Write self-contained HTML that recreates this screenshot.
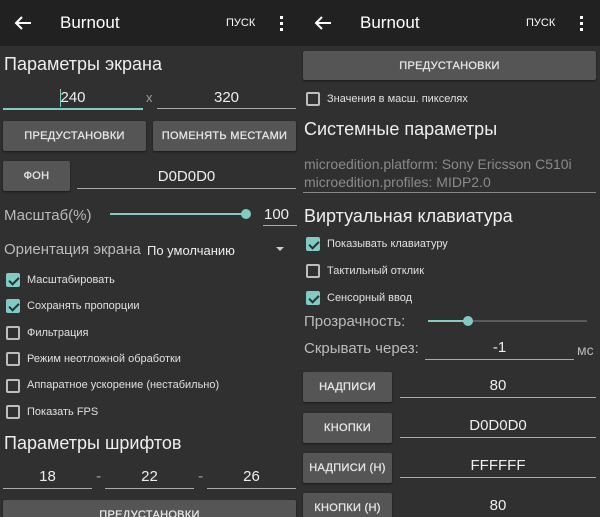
<!DOCTYPE html>
<html style="width:600px;height:517px;overflow:hidden"><head><meta charset="utf-8"><style>
*{margin:0;padding:0;box-sizing:border-box}
body{width:600px;height:517px;background:#303030;font-family:"Liberation Sans",sans-serif;color:#e8e8e8;position:relative;overflow:hidden}
.a{position:absolute;white-space:nowrap}
.bar{position:absolute;top:0;height:46px;width:300px;background:#212121}
.h{font-size:18px;color:#eee}
.btn{position:absolute;background:#555;color:#e6e6e6;font-size:11px;font-weight:normal;letter-spacing:0.3px;-webkit-text-stroke:0.3px #e6e6e6;display:flex;align-items:center;justify-content:center;border-radius:2px;box-shadow:0 1px 2px rgba(0,0,0,.5)}
.ul{position:absolute;height:1px;background:#aaa}
.in{position:absolute;font-size:15px;text-align:center;color:#eee}
.cb{position:absolute;width:14px;height:14px;border:2px solid #bdbdbd;border-radius:2px}
.cb.on{background:#80cbc4;border-color:#80cbc4}
.cb.on::after{content:"";position:absolute;left:3px;top:0px;width:4px;height:8px;border:solid #263238;border-width:0 2px 2px 0;transform:rotate(45deg)}
.ct{position:absolute;font-size:11px;color:#e0e0e0}
.lbl{position:absolute;font-size:15px;color:#bbb}
</style></head><body>
<div class="bar" style="left:0"></div><div class="bar" style="left:300px"></div>
<svg class="a" style="left:14px;top:15px" width="18" height="16"><path d="M2 8H17M8 2L2 8L8 14" stroke="#fff" stroke-width="2" fill="none"/></svg>
<div class="a" style="left:60px;top:13px;font-size:17px;color:#fff">Burnout</div>
<div class="a" style="left:226px;top:17px;font-size:11px;color:#fff">ПУСК</div>
<div class="a" style="left:280px;top:16px;width:3px;height:3px;background:#fff;box-shadow:0 6px #fff,0 12px #fff"></div>
<svg class="a" style="left:314px;top:15px" width="18" height="16"><path d="M2 8H17M8 2L2 8L8 14" stroke="#fff" stroke-width="2" fill="none"/></svg>
<div class="a" style="left:360px;top:13px;font-size:17px;color:#fff">Burnout</div>
<div class="a" style="left:526px;top:17px;font-size:11px;color:#fff">ПУСК</div>
<div class="a" style="left:580px;top:16px;width:3px;height:3px;background:#fff;box-shadow:0 6px #fff,0 12px #fff"></div>

<!-- left -->
<div class="a h" style="left:4px;top:54px">Параметры экрана</div>
<div class="in" style="left:3px;top:89px;width:140px">240</div>
<div class="a" style="left:60px;top:89px;width:1px;height:18px;background:#80cbc4"></div>
<div class="ul" style="left:3px;top:108px;width:140px;height:2px;background:#80cbc4"></div>
<div class="a" style="left:146px;top:90px;font-size:13px;color:#999">x</div>
<div class="in" style="left:157px;top:89px;width:139px">320</div>
<div class="ul" style="left:157px;top:108px;width:139px"></div>
<div class="btn" style="left:3px;top:121px;width:143px;height:30px">ПРЕДУСТАНОВКИ</div>
<div class="btn" style="left:153px;top:121px;width:143px;height:30px">ПОМЕНЯТЬ МЕСТАМИ</div>
<div class="btn" style="left:3px;top:161px;width:67px;height:30px">ФОН</div>
<div class="in" style="left:77px;top:168px;width:219px">D0D0D0</div>
<div class="ul" style="left:77px;top:188px;width:219px"></div>
<div class="lbl" style="left:4px;top:207px">Масштаб(%)</div>
<div class="a" style="left:110px;top:213px;width:136px;height:2px;background:#80cbc4"></div>
<div class="a" style="left:241px;top:209px;width:10px;height:10px;border-radius:50%;background:#80cbc4"></div>
<div class="in" style="left:263px;top:206px;width:27px">100</div>
<div class="ul" style="left:263px;top:225px;width:34px"></div>
<div class="lbl" style="left:4px;top:241px">Ориентация экрана</div>
<div class="a" style="left:147px;top:243px;font-size:13px;color:#eee">По умолчанию</div>
<div class="a" style="left:276px;top:247px;border:4px solid transparent;border-top:4px solid #ccc"></div>
<div class="cb on" style="left:6px;top:273px"></div><div class="ct" style="left:27px;top:274px">Масштабировать</div>
<div class="cb on" style="left:6px;top:299px"></div><div class="ct" style="left:27px;top:300px">Сохранять пропорции</div>
<div class="cb" style="left:6px;top:326px"></div><div class="ct" style="left:27px;top:327px">Фильтрация</div>
<div class="cb" style="left:6px;top:352px"></div><div class="ct" style="left:27px;top:353px">Режим неотложной обработки</div>
<div class="cb" style="left:6px;top:379px"></div><div class="ct" style="left:27px;top:379px">Аппаратное ускорение (нестабильно)</div>
<div class="cb" style="left:6px;top:405px"></div><div class="ct" style="left:27px;top:406px">Показать FPS</div>
<div class="a h" style="left:4px;top:433px">Параметры шрифтов</div>
<div class="in" style="left:3px;top:468px;width:89px">18</div><div class="ul" style="left:3px;top:488px;width:89px"></div>
<div class="a" style="left:96px;top:468px;color:#999">-</div>
<div class="in" style="left:105px;top:468px;width:89px">22</div><div class="ul" style="left:105px;top:488px;width:89px"></div>
<div class="a" style="left:198px;top:468px;color:#999">-</div>
<div class="in" style="left:207px;top:468px;width:89px">26</div><div class="ul" style="left:207px;top:488px;width:89px"></div>
<div class="btn" style="left:3px;top:500px;width:293px;height:17px;align-items:flex-start;padding-top:9px;border-radius:2px 2px 0 0">ПРЕДУСТАНОВКИ</div>

<!-- right -->
<div class="btn" style="left:303px;top:51px;width:293px;height:29px">ПРЕДУСТАНОВКИ</div>
<div class="cb" style="left:306px;top:92px"></div><div class="ct" style="left:327px;top:93px">Значения в масш. пикселях</div>
<div class="a h" style="left:304px;top:119px">Системные параметры</div>
<div class="a" style="left:304px;top:155px;font-size:14px;color:#8a8a8a;line-height:18px">microedition.platform: Sony Ericsson C510i<br>microedition.profiles: MIDP2.0</div>
<div class="ul" style="left:303px;top:192px;width:293px;background:#888"></div>
<div class="a h" style="left:304px;top:206px">Виртуальная клавиатура</div>
<div class="cb on" style="left:306px;top:237px"></div><div class="ct" style="left:327px;top:238px">Показывать клавиатуру</div>
<div class="cb" style="left:306px;top:264px"></div><div class="ct" style="left:327px;top:265px">Тактильный отклик</div>
<div class="cb on" style="left:306px;top:291px"></div><div class="ct" style="left:327px;top:292px">Сенсорный ввод</div>
<div class="lbl" style="left:304px;top:313px">Прозрачность:</div>
<div class="a" style="left:428px;top:320px;width:40px;height:2px;background:#80cbc4"></div>
<div class="a" style="left:468px;top:320px;width:119px;height:2px;background:#5a5a5a"></div>
<div class="a" style="left:463px;top:316px;width:10px;height:10px;border-radius:50%;background:#80cbc4"></div>
<div class="lbl" style="left:304px;top:340px">Скрывать через:</div>
<div class="in" style="left:425px;top:339px;width:149px">-1</div>
<div class="ul" style="left:425px;top:359px;width:149px"></div>
<div class="lbl" style="left:577px;top:342px;font-size:14px">мс</div>
<div class="btn" style="left:303px;top:372px;width:89px;height:30px">НАДПИСИ</div>
<div class="in" style="left:400px;top:377px;width:196px">80</div><div class="ul" style="left:400px;top:397px;width:196px"></div>
<div class="btn" style="left:303px;top:413px;width:89px;height:30px">КНОПКИ</div>
<div class="in" style="left:400px;top:417px;width:196px">D0D0D0</div><div class="ul" style="left:400px;top:437px;width:196px"></div>
<div class="btn" style="left:303px;top:453px;width:89px;height:30px">НАДПИСИ (Н)</div>
<div class="in" style="left:400px;top:457px;width:196px">FFFFFF</div><div class="ul" style="left:400px;top:477px;width:196px"></div>
<div class="btn" style="left:303px;top:493px;width:89px;height:24px;align-items:flex-start;padding-top:9px;border-radius:2px 2px 0 0">КНОПКИ (Н)</div>
<div class="in" style="left:400px;top:497px;width:196px">80</div>
</body></html>
